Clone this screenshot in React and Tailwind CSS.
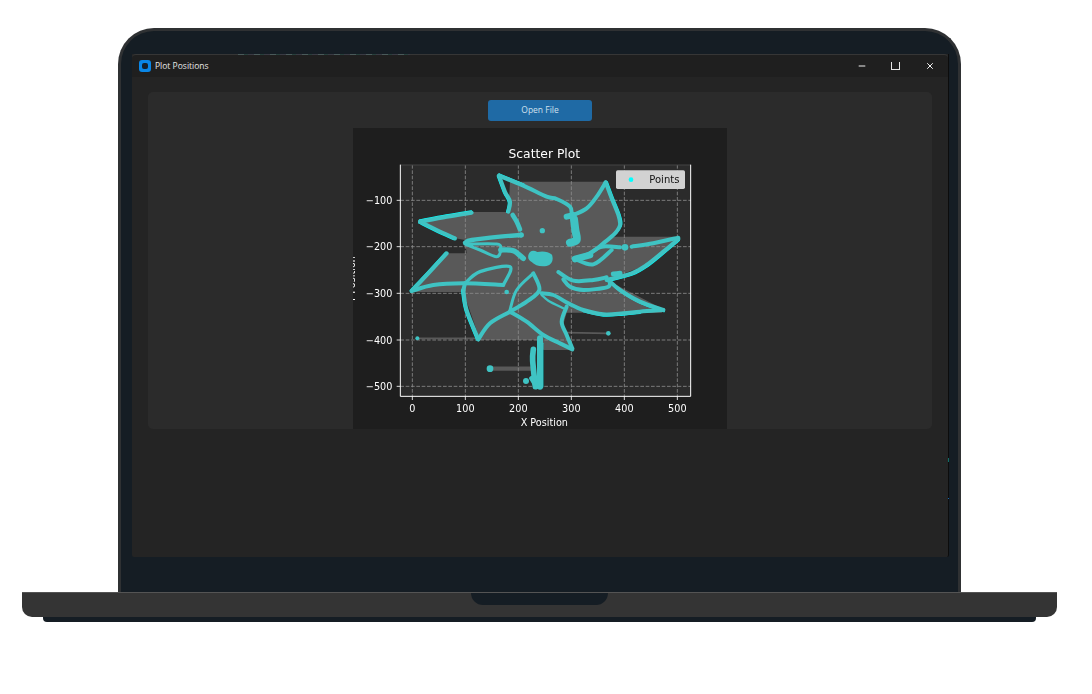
import { Minus, X } from 'lucide-react'

// All plot coordinates are in a 3x space of the plot picture (374x301 drawn at 1122x903)
const GRID_X = [217, 376, 535, 694, 853, 1012]
const GRID_Y = [241, 380, 520, 660, 799]
const X_LABELS = ['0', '100', '200', '300', '400', '500']
const Y_LABELS = ['−100', '−200', '−300', '−400', '−500']

const FILL =
  'M510,185 L800,185 L842,315 L815,350 L1015,350 L1015,360 L920,435 L800,480 L970,568 L965,578 L680,578 L668,620 L697,690 L610,690 L600,660 L420,660 L370,516 L215,516 L320,400 L380,400 L375,360 L345,355 L240,305 L395,276 L505,276 Z'

// Smooth line through the hand-read points
function smooth(pts) {
  let d = `M${pts[0][0]},${pts[0][1]}`
  for (let i = 0; i < pts.length - 1; i++) {
    const p0 = pts[Math.max(i - 1, 0)]
    const p1 = pts[i]
    const p2 = pts[i + 1]
    const p3 = pts[Math.min(i + 2, pts.length - 1)]
    const c1x = p1[0] + (p2[0] - p0[0]) / 6
    const c1y = p1[1] + (p2[1] - p0[1]) / 6
    const c2x = p2[0] - (p3[0] - p1[0]) / 6
    const c2y = p2[1] - (p3[1] - p1[1]) / 6
    d += ` C${c1x},${c1y} ${c2x},${c2y} ${p2[0]},${p2[1]}`
  }
  return d
}

const BLADE_TOP_EDGE = [[477, 167], [550, 197], [620, 230]]
const BLADE_TOP_LEFT = [[477, 167], [495, 215], [510, 245], [505, 275]]
const BLADE_NE_RIGHT = [[797, 187], [815, 235], [835, 285], [840, 315], [825, 340]]
const BLADE_E_LOWER = [[1015, 357], [970, 395], [920, 435], [875, 460], [800, 480]]
const BLADE_SE_UPPER = [[805, 480], [840, 510], [900, 545], [970, 570]]
const BLADE_SE_LOWER = [[970, 570], [900, 575], [850, 580], [790, 583], [730, 570], [685, 550], [640, 525], [605, 520]]
const BLADE_W_UPPER = [[240, 305], [320, 290], [395, 278]]
const BLADE_W_LOWER = [[240, 305], [290, 330], [345, 355]]
const BLADE_SW_UPPER = [[215, 513], [265, 460], [320, 400]]
const BLADE_S_LEFT = [[370, 510], [380, 570], [415, 658]]

// Outer edges that show the pure cyan of the points: [points, dx, dy]
const EDGES = [
  [BLADE_TOP_EDGE.slice(0, 2), 1, -4],
  [BLADE_TOP_LEFT, -4, 1],
  [BLADE_NE_RIGHT, 4, -1],
  [BLADE_E_LOWER, 2, 4],
  [BLADE_SE_UPPER, 2, 4],
  [BLADE_SE_LOWER.slice(1, 5), 0, 4],
  [BLADE_W_UPPER, -1, -4],
  [BLADE_W_LOWER, -3, 3],
  [BLADE_SW_UPPER, -3, -2],
  [BLADE_S_LEFT, -4, 1],
  [[[600, 670], [600, 800]], 7, 0],
]

const OUTLINES = [
  [[...BLADE_TOP_EDGE, [650, 237], [690, 260], [695, 285]], 12],
  [BLADE_TOP_LEFT, 12],
  [[[518, 285], [530, 305], [540, 328]], 14],
  [[[680, 290], [700, 285]], 18],
  [[[702, 298], [706, 330], [710, 360], [690, 368]], 24],
  [[[700, 285], [740, 265], [770, 230], [797, 187]], 12],
  [[[797, 187], [815, 235], [835, 285], [840, 315], [825, 340], [790, 370], [750, 400], [705, 417]], 12],
  [[[705, 417], [760, 433], [815, 390]], 12],
  [[[750, 400], [785, 380], [840, 382]], 12],
  [[[705, 417], [750, 405]], 20],
  [[[875, 380], [940, 370], [1015, 353]], 12],
  [BLADE_E_LOWER, 12],
  [[[655, 456], [700, 482], [760, 480], [800, 472]], 12],
  [[[820, 462], [840, 460]], 15],
  [[[670, 478], [690, 500], [730, 510], [800, 502], [810, 490]], 12],
  [BLADE_SE_UPPER, 12],
  [BLADE_SE_LOWER, 12],
  [[[605, 525], [625, 542], [670, 565]], 7],
  [[[680, 560], [665, 605], [680, 645], [697, 685]], 12],
  [[[697, 688], [660, 670], [610, 645], [560, 605], [510, 575]], 12],
  [[[580, 460], [598, 510], [560, 545], [510, 575], [450, 610], [415, 658]], 12],
  [[[580, 460], [530, 510], [510, 570]], 9],
  [BLADE_S_LEFT, 12],
  [[[370, 510], [375, 490]], 12],
  [[[375, 490], [420, 455], [510, 440], [490, 495]], 10],
  [[[215, 513], [280, 495], [370, 490], [490, 495]], 12],
  [BLADE_SW_UPPER, 12],
  [BLADE_W_UPPER, 12],
  [BLADE_W_LOWER, 12],
  [[[375, 368], [395, 360], [480, 350], [545, 345]], 13],
  [[[375, 372], [420, 390], [470, 410], [482, 385], [470, 372], [385, 372]], 9],
  [[[482, 390], [520, 392], [550, 415]], 16],
  [[[600, 655], [600, 800]], 18],
  [[[580, 688], [578, 722], [586, 800]], 17],
  [[[575, 775], [590, 800]], 15],
]

const POINTS = [
  [607, 332, 8],
  [500, 516, 7],
  [855, 382, 10],
  [543, 345, 8],
  [450, 746, 10],
  [558, 783, 9],
  [232, 655, 6],
  [805, 640, 7],
]

function ScatterPlot() {
  return (
    <svg
      viewBox="39 24 1122 903"
      className="w-[374px] h-[301px] shrink-0 bg-[#1e1e1e] blur-[0.4px] font-['DejaVu_Sans',sans-serif]"
    >
      <rect x="181" y="135" width="871" height="694" fill="#2b2b2b" />
      <path d={FILL} fill="#595959" />
      <path d="M232,655 L420,655 M680,638 L805,640" stroke="#595959" strokeWidth="5" fill="none" />
      <path d="M450,746 L578,746" stroke="#595959" strokeWidth="13" fill="none" />

      {GRID_X.map((x) => (
        <line key={x} x1={x} x2={x} y1="135" y2="829" stroke="#8c8c8c" strokeWidth="2.5" strokeDasharray="11 5" />
      ))}
      {GRID_Y.map((y) => (
        <line key={y} x1="181" x2="1052" y1={y} y2={y} stroke="#8c8c8c" strokeWidth="2.5" strokeDasharray="11 5" />
      ))}

      {EDGES.map(([pts, dx, dy], i) => (
        <path
          key={i}
          d={smooth(pts)}
          transform={`translate(${dx} ${dy})`}
          fill="none"
          stroke="#00ffff"
          strokeWidth="6"
          strokeLinecap="round"
          strokeLinejoin="round"
        />
      ))}
      <g fill="none" stroke="#3fc3c3" strokeLinecap="round" strokeLinejoin="round">
        {OUTLINES.map(([pts, w], i) => (
          <path key={i} d={smooth(pts)} strokeWidth={w} />
        ))}
      </g>
      <g fill="#3fc3c3">
        <path d="M565,405 Q572,386 592,396 Q618,390 636,404 Q644,430 620,438 Q590,442 575,426 Q562,420 565,405 Z" />
        {POINTS.map(([cx, cy, r]) => (
          <circle key={cx} cx={cx} cy={cy} r={r} />
        ))}
      </g>

      {/* spines and ticks */}
      <path d="M181,135 L1052,135" stroke="#444444" strokeWidth="3" />
      <path d="M181,134 L181,829 L1052,829 L1052,134" fill="none" stroke="#ffffff" strokeWidth="3" />
      {GRID_X.map((x) => (
        <line key={x} x1={x} x2={x} y1="829" y2="840" stroke="#ffffff" strokeWidth="2.5" />
      ))}
      {GRID_Y.map((y) => (
        <line key={y} x1="170" x2="181" y1={y} y2={y} stroke="#ffffff" strokeWidth="2.5" />
      ))}

      {X_LABELS.map((label, i) => (
        <text key={label} x={GRID_X[i]} y="877" fontSize="29" fill="#ffffff" textAnchor="middle">
          {label}
        </text>
      ))}
      {Y_LABELS.map((label, i) => (
        <text key={label} x="157" y={GRID_Y[i] + 11} fontSize="29" fill="#ffffff" textAnchor="end">
          {label}
        </text>
      ))}
      <text x="613" y="115" fontSize="37" fill="#ffffff" textAnchor="middle">
        Scatter Plot
      </text>
      <text x="613" y="917" fontSize="29" fill="#ffffff" textAnchor="middle">
        X Position
      </text>
      <text x="46" y="478" fontSize="29" fill="#ffffff" textAnchor="middle" transform="rotate(-90 46 478)">
        Y Position
      </text>

      {/* legend */}
      <rect x="828" y="151" width="207" height="56" rx="5" fill="#d2d2d2" />
      <circle cx="873" cy="179" r="7" fill="#00ffff" />
      <text x="928" y="188" fontSize="30" fill="#111111">
        Points
      </text>
    </svg>
  )
}

function TitleBar() {
  return (
    <div className="h-[23px] shrink-0 flex items-center bg-[#1f1f1f] border-t border-[#363636] rounded-t-[4px] pl-[7px]">
      <div className="w-[12px] h-[12px] rounded-[3px] bg-[#0a86e6] flex items-center justify-center">
        <div className="w-[6px] h-[6px] rounded-[2px] bg-[#14202c]" />
      </div>
      <span className="ml-[4px] text-[8.5px] leading-none text-[#e6e6e6] font-['Open_Sans',sans-serif]">
        Plot Positions
      </span>
      <div className="ml-auto flex items-center text-[#f0f0f0]">
        <Minus size={10} strokeWidth={1} absoluteStrokeWidth className="mr-[24px]" />
        <div className="w-[9px] h-[8px] border-x border-b border-[#e6e6e6] mr-[25px]" />
        <X size={10} strokeWidth={1} absoluteStrokeWidth className="mr-[13px]" />
      </div>
    </div>
  )
}

export default function App() {
  return (
    <div className="w-[1092px] h-[694px] bg-white overflow-hidden pt-[28px]">
      {/* Lid */}
      <div className="ml-[118px] w-[843px] h-[564px] rounded-t-[36px] border-[3px] border-b-0 border-[#2f3133] bg-[#151d24] pt-[23px] pl-[11px]">
        <div className="relative w-[817px] h-[503px] flex flex-col bg-[#242424] border-r border-[#0c0c0c] rounded-b-[2px]">
          <TitleBar />
          <div className="mt-[15px] mx-[16px] h-[337px] rounded-[5px] bg-[#2b2b2b] overflow-hidden flex flex-col items-center pt-[8px]">
            <button className="w-[104px] h-[21px] shrink-0 rounded-[3px] bg-[#1f6aa5] text-[8.5px] text-[#cfe0ee] font-['Open_Sans',sans-serif]">
              Open File
            </button>
            <div className="mt-[7px] ml-[-1px]">
              <ScatterPlot />
            </div>
          </div>
          {/* bits of the desktop that show around the window */}
          <div className="absolute left-[106px] top-0 w-[172px] h-px bg-[repeating-linear-gradient(90deg,#4a5a5a_0_6px,#27403c_6px_10px,#3a3a44_10px_16px)]" />
          <div className="absolute right-[-1px] top-[404px] w-px h-[4px] bg-[#0f6f66]" />
          <div className="absolute right-[-1px] top-[444px] w-px h-px bg-[#1167b0]" />
        </div>
      </div>

      {/* Base */}
      <div className="ml-[22px] w-[1035px] h-[25px] rounded-b-[10px] bg-[#343434] border-t border-[#545454] flex justify-center">
        <div className="w-[137px] h-[12px] rounded-b-[12px] bg-[#151d24]" />
      </div>
      <div className="ml-[43px] w-[993px] h-[5px] rounded-b-[4px] bg-[#151d24]" />
    </div>
  )
}
